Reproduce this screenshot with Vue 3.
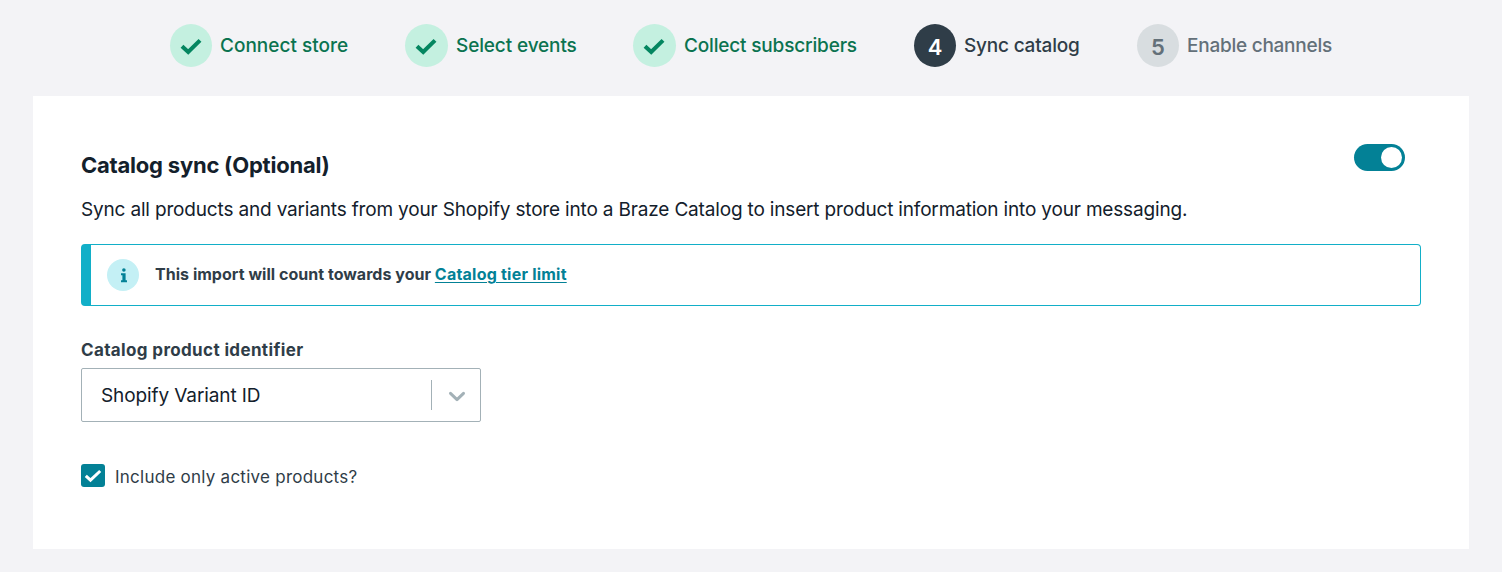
<script setup>
import { ref } from 'vue'

const steps = [
  { label: 'Connect store', state: 'done', tracking: 0, width: 235 },
  { label: 'Select events', state: 'done', tracking: -0.13, width: 228 },
  { label: 'Collect subscribers', state: 'done', tracking: -0.17, width: 281 },
  { label: 'Sync catalog', state: 'current', tracking: -0.2, width: 223 },
  { label: 'Enable channels', state: 'upcoming', tracking: -0.25, width: 200 },
]

const syncEnabled = ref(true)
const activeOnly = ref(true)
</script>

<template>
  <div class="page">
    <ol class="steps">
      <li
        v-for="(step, i) in steps"
        :key="step.label"
        :class="['step', step.state]"
        :style="{ width: step.width + 'px' }"
      >
        <span class="badge">
          <svg v-if="step.state === 'done'" width="22" height="17" viewBox="0 0 22 17">
            <path d="M2 8.3 8.2 14 20 2.4" fill="none" stroke="currentColor" stroke-width="4.1" />
          </svg>
          <span v-else class="number">{{ i + 1 }}</span>
        </span>
        <span class="step-label" :style="{ letterSpacing: step.tracking + 'px' }">{{ step.label }}</span>
      </li>
    </ol>

    <main class="card">
      <header class="card-header">
        <h2>Catalog sync (Optional)</h2>
        <button
          class="toggle"
          :class="{ on: syncEnabled }"
          role="switch"
          :aria-checked="syncEnabled"
          aria-label="Catalog sync"
          @click="syncEnabled = !syncEnabled"
        >
          <span class="knob"></span>
        </button>
      </header>
      <p class="description">Sync all products and variants from your Shopify store into a Braze Catalog to insert product information into your messaging.</p>

      <div class="notice">
        <span class="info">
          <svg width="8" height="15" viewBox="0 0 8 15" fill="currentColor">
            <circle cx="3.9" cy="2" r="1.8" />
            <path d="M1 5.3h4.6v6.9H7v2H1v-2h1.4V7.3H1z" />
          </svg>
        </span>
        <p>This import will count towards your <a href="#">Catalog tier limit</a></p>
      </div>

      <div class="field-label">Catalog product identifier</div>
      <div class="select">
        <span class="select-value">Shopify Variant ID</span>
        <span class="divider"></span>
        <svg class="chevron" width="18" height="12" viewBox="0 0 18 12">
          <path d="M2.5 2.4 9 8.6l6.5-6.2" fill="none" stroke="currentColor" stroke-width="3" stroke-linecap="round" stroke-linejoin="round" />
        </svg>
      </div>

      <div class="check-row" @click="activeOnly = !activeOnly">
        <span class="checkbox">
          <svg v-if="activeOnly" width="18" height="14" viewBox="0 0 18 14">
            <path d="M1.8 6.8 6.5 11.2 16.2 2" fill="none" stroke="#fff" stroke-width="3" />
          </svg>
        </span>
        <span class="check-label">Include only active products?</span>
      </div>
    </main>
  </div>
</template>

<style>
body {
  margin: 0;
  background: #f3f3f6;
}
</style>

<style scoped>
.page {
  box-sizing: border-box;
  width: 1502px;
  height: 572px;
  padding: 24px 33px 0;
  overflow: hidden;
  background: #f3f3f6;
  font-family: Inter, "Liberation Sans", sans-serif;
  color: #13202b;
}
.steps {
  display: flex;
  height: 43px;
  margin: 0 0 29px;
  padding: 0 0 0 137px;
  list-style: none;
}
.step {
  display: flex;
  align-items: center;
  flex: none;
}
.badge {
  display: flex;
  align-items: center;
  justify-content: center;
  box-sizing: border-box;
  width: 42px;
  height: 43px;
  margin-right: 8px;
  border-radius: 50%;
  flex: none;
}
.done + .done .badge {
  width: 43px;
}
.badge svg {
  margin: 2px 1px 0 0;
}
.number {
  padding-top: 3px;
  font-size: 22px;
  line-height: 26px;
  font-weight: 600;
}
.step-label {
  font-size: 19px;
  line-height: 26px;
  font-weight: 500;
  white-space: nowrap;
}
.done {
  color: #0b7350;
}
.done .badge {
  background: #c4f0e0;
  color: #048660;
}
.current {
  color: #2f3d48;
}
.current .badge {
  background: #2f3d48;
  color: #fff;
}
.upcoming {
  color: #637079;
}
.upcoming .badge {
  background: #d8dde0;
}
.card {
  box-sizing: border-box;
  height: 453px;
  padding: 48px;
  background: #fff;
}
.card-header {
  display: flex;
  justify-content: space-between;
  align-items: flex-start;
  height: 36px;
}
h2 {
  margin: 6px 0 0;
  font-size: 22px;
  line-height: 30px;
  font-weight: 700;
  letter-spacing: -0.22px;
}
.toggle {
  display: flex;
  align-items: center;
  width: 51px;
  height: 27px;
  margin: 0 16px 0 0;
  padding: 0 3px;
  border: 0;
  border-radius: 14px;
  background: #a5b1b7;
}
.toggle.on {
  justify-content: flex-end;
  background: #038196;
}
.knob {
  width: 21px;
  height: 21px;
  border-radius: 50%;
  background: #fff;
}
.description {
  margin: 15px 0 19px;
  font-size: 19px;
  line-height: 30px;
  letter-spacing: -0.17px;
  white-space: nowrap;
}
.notice {
  display: flex;
  align-items: center;
  box-sizing: border-box;
  height: 62px;
  padding-left: 16px;
  border: 1px solid #12afc8;
  border-left-width: 10px;
  border-radius: 4px;
}
.info {
  display: flex;
  align-items: center;
  justify-content: center;
  width: 32px;
  height: 32px;
  margin-right: 16px;
  border-radius: 50%;
  background: #c4f0f5;
  color: #038196;
}
.info svg {
  margin-left: 1px;
}
.notice p {
  margin: 0 0 2px;
  font-size: 16px;
  line-height: 24px;
  font-weight: 700;
  letter-spacing: 0.03px;
  color: #2f3d48;
}
.notice a {
  color: #038196;
  letter-spacing: 0.22px;
  text-decoration: underline;
  text-decoration-thickness: 1px;
  text-underline-offset: 2px;
}
.field-label {
  margin: 34px 0 8px;
  font-size: 17px;
  line-height: 20px;
  font-weight: 700;
  letter-spacing: 0.36px;
  color: #2f3d48;
}
.select {
  display: flex;
  align-items: center;
  box-sizing: border-box;
  width: 400px;
  height: 54px;
  padding: 0 15px 0 19px;
  border: 1px solid #a3b1b7;
  border-radius: 2px;
}
.select-value {
  flex: 1;
  padding-top: 2px;
  font-size: 19px;
  line-height: 26px;
  letter-spacing: -0.1px;
}
.divider {
  width: 1px;
  height: 30px;
  background: #a3b1b7;
}
.chevron {
  margin: 3px -1px 0 16px;
  color: #a3b1b7;
}
.check-row {
  display: flex;
  align-items: center;
  height: 23px;
  margin-top: 42px;
}
.checkbox {
  display: flex;
  align-items: center;
  justify-content: center;
  width: 24px;
  height: 23px;
  margin-right: 10px;
  border-radius: 3px;
  background: #038196;
}
.check-label {
  padding-top: 2px;
  font-size: 17px;
  line-height: 24px;
  letter-spacing: 0.25px;
  color: #2f3d48;
}
</style>
